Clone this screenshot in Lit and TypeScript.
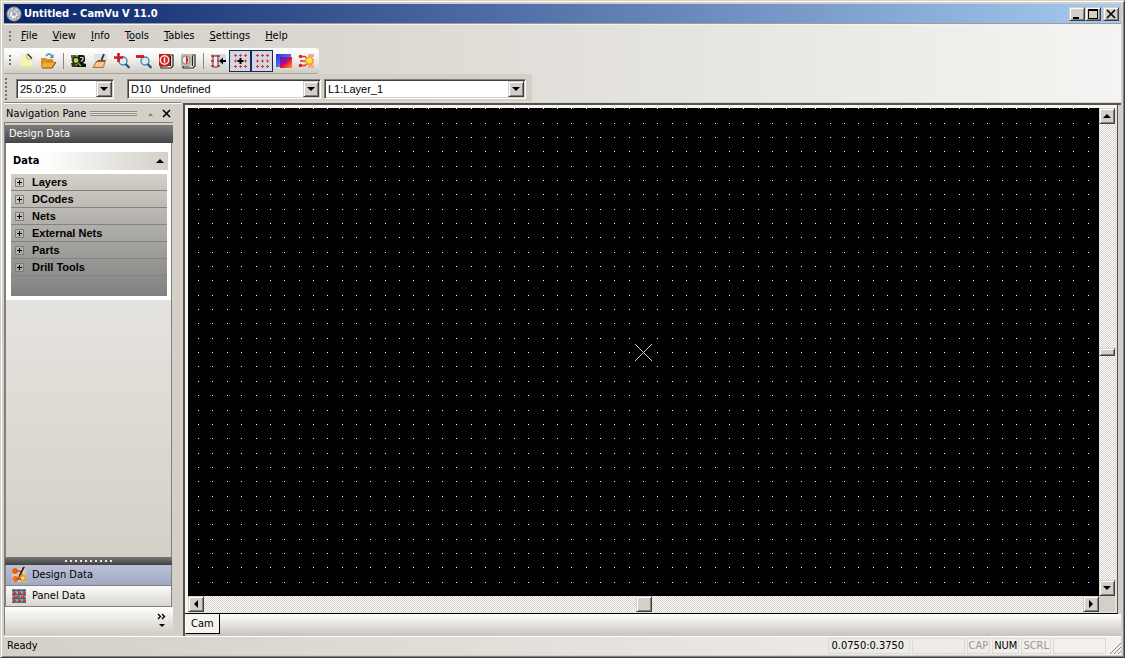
import { LitElement, html, css, svg } from "lit";
import { customElement, property } from "lit/decorators.js";
import { classMap } from "lit/directives/class-map.js";

const glyphs = {
  app: svg`<circle cx="8" cy="8" r="7" fill="#c9cdd2" stroke="#8f979f"/><path d="M4 4l3 2 1-4 2 4 3-1-2 3 3 2-4 1 1 3-3-2-2 3-1-4-4 0 3-2z" fill="#eef0f2" stroke="#7b828a" stroke-width=".7"/><circle cx="8" cy="8" r="2" fill="#9aa3ad"/>`,
  newFile: svg`<path d="M3 1h7l4 4v10H3z" fill="#f4f3b8"/><path d="M3 13h11v2H3z" fill="#e6e59a"/><path d="M9 1h1l4 4v1h-4z" fill="#fffff0"/><path d="M9.500 1l4.500 4.500" stroke="#222" stroke-width="1.300"/><path d="M9 1v5h5" fill="none" stroke="#8a8a60" stroke-width=".6"/>`,
  open: svg`<path d="M1 5h5l1 1h6v3H5l-4 6z" fill="#d98f24"/><path d="M5 9h11l-4 6H1z" fill="#f2ab35"/><path d="M2 15h10l4-6" fill="none" stroke="#8a5208" stroke-width="1.200"/><path d="M6 9h9" stroke="#a8660f" stroke-width=".7"/><path d="M6 3q3-4 6 0" fill="none" stroke="#3f8fb0" stroke-width="1.300"/><path d="M13.500 1v4H9.500z" fill="#3f8fb0"/>`,
  view: svg`<path d="M1 2h14v6H1z" fill="#a9b496"/><path d="M1 2h5v3H1z" fill="#5a7026"/><path d="M8 2h5l2 2v4l-2 2 3 1v3H6l2-4z" fill="#101408"/><path d="M10 4.500h3v2l-2 2" fill="none" stroke="#d8dccc" stroke-width="1.200"/><circle cx="6" cy="7.500" r="3.200" fill="#b4d468" stroke="#1c280a" stroke-width="1.500"/><path d="M1 10h3l4 4H2z" fill="#2d3d12"/><path d="M8 10l3 3" stroke="#86a94a" stroke-width="1.500"/>`,
  clean: svg`<path d="M2 1h13v12H2z" fill="#dfe1e8"/><path d="M12 1l-2.500 6" stroke="#26313e" stroke-width="1.800"/><path d="M6 7h8l-1 2H4z" fill="#8a4a1c"/><path d="M4.500 8.500h8.500l-1.500 6H1z" fill="#f8bd85" stroke="#9a5a26" stroke-width=".8"/><path d="M4.500 13l1.500-3M8 13l1.500-3" stroke="#ffe2bf"/>`,
  zoomIn: svg`<circle cx="9" cy="8" r="4" fill="#dcecf6" stroke="#4d84a8" stroke-width="1.400"/><path d="M11.500 11l4 4" stroke="#245a84" stroke-width="2.400"/><path d="M0 4.500h9M4.500 0v9" stroke="#cf1820" stroke-width="2.600"/>`,
  zoomOut: svg`<circle cx="9" cy="8" r="4" fill="#dcecf6" stroke="#4d84a8" stroke-width="1.400"/><path d="M11.500 11l4 4" stroke="#245a84" stroke-width="2.400"/><path d="M0 3.500h8" stroke="#cf1820" stroke-width="2.800"/>`,
  zoomAll: svg`<path d="M9 2h6v11l-2 2H3v-2h6z" fill="#f1efe2" stroke="#26241c" stroke-width="1.200"/><path d="M12.500 3v10" stroke="#26241c" stroke-width="1.200"/><rect x="1" y="1" width="11" height="12" fill="#c8181c"/><circle cx="6.500" cy="7" r="4.200" fill="#d82020" stroke="#fbe4e2" stroke-width="1.500"/><path d="M6.500 4.500v5" stroke="#fff" stroke-width="1.500"/>`,
  zoomPrev: svg`<path d="M9 2h6v11l-2 2H3v-2h6z" fill="#f1efe2" stroke="#26241c" stroke-width="1.200"/><path d="M12.500 3v10" stroke="#26241c" stroke-width="1.200"/><rect x="1" y="1" width="11" height="12" fill="#bdbbb2"/><circle cx="6" cy="7" r="4" fill="#f3f1ec" stroke="#8c8b84" stroke-width="1.200"/><path d="M6.500 3.500q3 3.500 0 7z" fill="#d62222" stroke="#d62222"/>`,
  snapPad: svg`<rect x="1" y="1" width="15" height="14" fill="#cfdae3"/><path d="M3 3h5v11H3z" fill="#e9eff4" stroke="#7d2020"/><path d="M1 3h3M1 13h3M7 3h3M7 13h3M1 8h3M7 8h2" stroke="#c02626" stroke-width="1.600"/><path d="M9 8l4-3.500V7h3v2h-3v2.500z" fill="#000"/>`,
  snapGrid: svg`<path d="M2 2.500h3M7 2.500h3M12 2.500h3M2 13.500h3M7 13.500h3M12 13.500h3M2 8h3M12 8h3M3.500 1v3M8.500 1v3M13.500 1v3M3.500 12v3M8.500 12v3M13.500 12v3M3.500 6.500v3M13.500 6.500v3" stroke="#d23a3a"/><path d="M5.500 8h6M8.500 5v6" stroke="#000" stroke-width="2"/>`,
  grid: svg`<path d="M2 2.500h3M7 2.500h3M12 2.500h3M2 13.500h3M7 13.500h3M12 13.500h3M2 8h3M7 8h3M12 8h3M3.500 1v3M8.500 1v3M13.500 1v3M3.500 12v3M8.500 12v3M13.500 12v3M3.500 6.500v3M8.500 6.500v3M13.500 6.500v3" stroke="#d23a3a"/>`,
  colors: svg`<defs><linearGradient id="cb" x1="0" y1="0" x2="1" y2="1"><stop offset="0" stop-color="#2436e8"/><stop offset="1" stop-color="#5aa4ff"/></linearGradient><linearGradient id="cr" x1="0" y1="0" x2="1" y2="1"><stop offset="0" stop-color="#5b0fb0"/><stop offset=".5" stop-color="#e01040"/><stop offset="1" stop-color="#ff9a30"/></linearGradient></defs><rect x="0" y="1" width="15" height="13" fill="url(#cb)"/><rect x="4" y="4" width="12" height="11" fill="url(#cr)"/><rect x="5" y="5" width="6" height="6" fill="#7a18c0" opacity=".7"/>`,
  nets: svg`<path d="M2 3.500h5l2 2M2 8h5M2 12.500h5l2-2" fill="none" stroke="#e0301c" stroke-width="1.500"/><circle cx="2.500" cy="3.500" r="1.800" fill="#d42a1c"/><circle cx="2.500" cy="12.500" r="1.800" fill="#d42a1c"/><path d="M10 1h6v3h-6zM10 12h6v3h-6z" fill="#f0a8a0"/><circle cx="11.500" cy="8" r="4.500" fill="#f2a81c"/><circle cx="11.500" cy="7.500" r="2.800" fill="#ffdc60"/>`,
  design: svg`<rect x="1" y="1" width="14" height="14" fill="#dcc9b4"/><circle cx="4" cy="4" r="3" fill="#e8641c"/><circle cx="4.500" cy="12" r="3" fill="#ee7420"/><circle cx="12" cy="11" r="3.600" fill="#f0a21c"/><circle cx="12" cy="11" r="1.500" fill="#d9dce4"/><path d="M5 4h4l2 4M5 12h5" fill="none" stroke="#c8541a" stroke-width="1.300"/><path d="M14 0l-5 9-2 4 1-5 4-8z" fill="#1e1e28"/>`,
  panel: svg`<rect x="1" y="1" width="14" height="14" fill="#9fb0b8"/><path d="M1 2.500h14M1 6.500h14M1 10.500h14M1 14h14" stroke="#4d606c" stroke-width="1.300"/><path d="M3 1v14M8 1v14M13 1v14" stroke="#5a4a50"/><path d="M2 4h3v2H2zM7 4h3v2H7zM12 4h3v2h-3zM4 8h3v2H4zM10 8h3v2h-3zM2 12h3v2H2zM7 12h3v2H7zM12 12h3v2h-3z" fill="#c83c44"/>`,
  min: svg`<path d="M4 11h6v2H4z" fill="#000"/>`,
  max: svg`<path d="M3 3h10v10H3zM4 5v7h8V5z" fill="#000" fill-rule="evenodd"/>`,
  close: svg`<path d="M4 4l8 8M12 4l-8 8" stroke="#000" stroke-width="1.700"/>`,
  up: svg`<path d="M4 10h8L8 6z" fill="#000"/>`,
  down: svg`<path d="M4 6h8l-4 4z" fill="#000"/>`,
  left: svg`<path d="M10 4v8L6 8z" fill="#000"/>`,
  right: svg`<path d="M6 4v8l4-4z" fill="#000"/>`,
  more: svg`<path d="M4 1l2.500 2.500L4 6M8 1l2.500 2.500L8 6" fill="none" stroke="#000" stroke-width="1.400"/><path d="M5 11h6l-3 3z" fill="#000"/>`,
};
type Glyph = keyof typeof glyphs;

const icon = (name: Glyph) =>
  html`<svg class="icon" width="16" height="16" viewBox="0 0 16 16" aria-hidden="true">${glyphs[name]}</svg>`;

const controls = css`
  * { box-sizing: border-box; }
  button, select {
    font: inherit;
    color: inherit;
    margin: 0;
    padding: 0;
    border: 0;
    background: none;
    border-radius: 0;
  }
  .icon { display: block; flex: none; }
  .raised {
    display: grid;
    place-content: center;
    background: #d4d0c8;
    border: 1px solid;
    border-color: #d4d0c8 #404040 #404040 #d4d0c8;
    box-shadow: inset 1px 1px #fff, inset -1px -1px #808080;
    overflow: hidden;
  }
`;

/** Drawing surface: black canvas with a dot grid and an origin cross. */
@customElement("cam-board")
export class CamBoard extends LitElement {
  @property({ type: Number }) pitch = 14.35;
  private observer = new ResizeObserver(() => this.draw());

  static styles = css`
    :host { display: block; min-width: 0; min-height: 0; overflow: hidden; background: #000; contain: size; }
    canvas { display: block; }
  `;

  connectedCallback() {
    super.connectedCallback();
    this.observer.observe(this);
  }
  disconnectedCallback() {
    this.observer.disconnect();
    super.disconnectedCallback();
  }
  protected firstUpdated() {
    this.draw();
  }

  private draw() {
    const canvas = this.renderRoot.querySelector("canvas");
    const g = canvas?.getContext("2d");
    if (!canvas || !g) return;
    const w = (canvas.width = this.clientWidth);
    const h = (canvas.height = this.clientHeight);
    const cx = Math.floor(w / 2);
    const cy = Math.floor(h / 2);
    const nx = Math.ceil(cx / this.pitch);
    const ny = Math.ceil(cy / this.pitch);
    g.fillStyle = "#f4f4f4";
    for (let i = -nx; i <= nx; i++) {
      for (let j = -ny; j <= ny; j++) {
        g.fillRect(Math.floor(cx + 0.47 + i * this.pitch), Math.floor(cy + 0.6 + j * this.pitch), 1, 1);
      }
    }
    g.fillStyle = "#d0d0d0";
    for (let k = -8; k <= 8; k++) {
      g.fillRect(cx + k, cy + k, 1, 1);
      g.fillRect(cx + k, cy - k, 1, 1);
    }
  }

  render() {
    return html`<canvas role="img" aria-label="Board"></canvas>`;
  }
}

/** Scroll bar with arrow buttons and a centred thumb. */
@customElement("cam-scroll")
export class CamScroll extends LitElement {
  @property({ type: Boolean, reflect: true }) vertical = false;

  static styles = [
    controls,
    css`
      :host {
        display: flex;
        background: repeating-conic-gradient(#fff 0 25%, #d4d0c8 0 50%) 0 0 / 2px 2px;
      }
      :host([vertical]) { flex-direction: column; }
      .raised { width: 16px; height: 16px; flex: none; }
      .track { flex: 1; display: flex; justify-content: center; align-items: center; }
      :host([vertical]) .track { flex-direction: column; }
      :host([vertical]) .thumb { height: 8px; }
    `,
  ];

  render() {
    const v = this.vertical;
    return html`
      <button class="raised" aria-label=${v ? "Up" : "Left"}>${icon(v ? "up" : "left")}</button>
      <div class="track"><button class="raised thumb" aria-label="Thumb"></button></div>
      <button class="raised" aria-label=${v ? "Down" : "Right"}>${icon(v ? "down" : "right")}</button>
    `;
  }
}

/** Docked pane on the left side. */
@customElement("nav-pane")
export class NavPane extends LitElement {
  private nodes = ["Layers", "DCodes", "Nets", "External Nets", "Parts", "Drill Tools"];

  static styles = [
    controls,
    css`
      :host { display: flex; flex-direction: column; border-top: 1px solid #808080; box-shadow: inset 0 1px #fff; }
      .caption { display: flex; align-items: center; gap: 4px; height: 19px; padding: 2px 9px 0 2px; }
      .grip { flex: 1; height: 5px; background: repeating-linear-gradient(#8d8a84 0 1px, #e6e3dc 1px 2px); margin: 0 1px 0 0; }
      .frame {
        flex: 1; display: flex; flex-direction: column; min-height: 0;
        margin: 0 8px 1px 0; border-top: 1px solid #808080; border-left: 1px solid #808080; padding-top: 2px;
      }
      h2 {
        margin: 0; padding: 0 4px; height: 18px; line-height: 17px; font-size: 11px; font-weight: normal;
        color: #fff; background: linear-gradient(#7d7d7d, #444);
      }
      .body {
        flex: 1; display: flex; flex-direction: column;
        border-left: 1px solid #808080; border-right: 1px solid #808080;
        margin-right: 1px; background: linear-gradient(#f0efec, #d4d0c8);
      }
      .card { background: #fff; padding: 9px 3px 4px 5px; }
      .section {
        display: flex; width: 100%; align-items: center; justify-content: space-between;
        height: 18px; padding-left: 2px; font-weight: bold;
        background: linear-gradient(90deg, #fff 20%, #d4d0c8);
      }
      .tree {
        margin: 4px 1px 0 0; padding: 0 0 20px; list-style: none;
        background: linear-gradient(#d4d0c8, #808080);
        font: bold 11px "Liberation Sans", Arial, sans-serif;
      }
      .tree li { border-bottom: 1px solid #85837f; height: 17px; }
      .node { display: flex; align-items: center; gap: 8px; height: 16px; padding-left: 4px; width: 100%; }
      .box { display: block; }
      .splitter {
        height: 8px; margin-right: 1px; background: linear-gradient(#777, #404040);
        display: grid; place-items: center;
      }
      .dots { width: 48px; height: 2px; background: repeating-linear-gradient(90deg, #e8e8e8 0 2px, transparent 2px 5px); }
      .tab {
        display: flex; align-items: center; gap: 5px; width: calc(100% - 1px); height: 21px; padding-left: 5px;
        border: 1px solid #808080; border-width: 0 1px 1px; background: linear-gradient(#fbfbfa, #d9d6cf);
      }
      .tab.on { background: linear-gradient(#b9c0d8, #a2a9c2); }
      .foot { display: flex; justify-content: flex-end; align-items: center; height: 28px; padding-right: 3px; background: linear-gradient(#fff, #d0ccc4); }
    `,
  ];

  render() {
    return html`
      <div class="caption">
        <span>Navigation Pane</span><span class="grip"></span>
        <svg width="16" height="8" viewBox="0 0 16 8" aria-hidden="true"><path d="M6 6h5L8.500 3z" fill="#85827c" /></svg>
        <button aria-label="Close pane">
          <svg class="icon" width="10" height="10" viewBox="0 0 10 10"><path d="M1 1l7 7M8 1L1 8" stroke="#000" stroke-width="1.600" /></svg>
        </button>
      </div>
      <div class="frame">
        <h2>Design Data</h2>
        <div class="body">
          <div class="card">
            <button class="section">Data ${icon("up")}</button>
            <ul class="tree">
              ${this.nodes.map(
                (n) => html`<li><button class="node">
                  <svg class="box" width="9" height="9" viewBox="0 0 9 9" aria-hidden="true"><path d="M.5 .5h8v8h-8z" fill="#d8d5ce" fill-opacity=".3" stroke="#7c7c7c" /><path d="M2 4.500h5M4.500 2v5" stroke="#000" /></svg>${n}</button></li>`
              )}
            </ul>
          </div>
        </div>
        <div class="splitter"><span class="dots"></span></div>
        <button class="tab on">${icon("design")}Design Data</button>
        <button class="tab">${icon("panel")}Panel Data</button>
        <div class="foot"><button aria-label="More">${icon("more")}</button></div>
      </div>
    `;
  }
}

type Tool = Glyph | "|";

@customElement("app-root")
export class AppRoot extends LitElement {
  private menus: [string, number][] = [
    ["File", 0], ["View", 0], ["Info", 0], ["Tools", 1], ["Tables", 0], ["Settings", 0], ["Help", 0],
  ];
  private tools: Tool[] = [
    "newFile", "open", "|", "view", "clean", "zoomIn", "zoomOut", "zoomAll", "zoomPrev", "|",
    "snapPad", "snapGrid", "grid", "colors", "nets",
  ];
  private pressed: Tool[] = ["snapGrid", "grid"];

  static styles = [
    controls,
    css`
      :host {
        display: flex;
        flex-direction: column;
        height: 100vh;
        box-sizing: border-box;
        background: #d4d0c8;
        border: 1px solid;
        border-color: #d4d0c8 #404040 #404040 #d4d0c8;
        box-shadow: inset 1px 1px #fff, inset -1px -1px #808080;
        font: 11px/14px "DejaVu Sans Condensed", Tahoma, sans-serif;
        color: #000;
        padding: 3px 3px 2px;
      }
      .title {
        display: flex; align-items: center; gap: 2px; height: 19px; padding: 0 2px;
        background: linear-gradient(90deg, #0a246a, #a6caf0);
      }
      h1 { flex: 1; margin: 0; font-size: 11px; font-weight: bold; color: #fff; }
      .caps { display: flex; }
      .caps .raised { width: 16px; height: 14px; }
      .caps .last { margin-left: 2px; }
      .bars {
        border-top: 1px solid #a09d96; padding-bottom: 1px; box-shadow: inset 0 1px #f4f3f0;
        background: linear-gradient(90deg, #d4d0c8, #dbd8d1 30%, #f5f4f2);
      }
      .grip { width: 2px; height: 11px; flex: none; background: repeating-linear-gradient(#77746e 0 2px, transparent 2px 4px); }
      .grip.tall { height: 22px; }
      nav { display: flex; align-items: center; gap: 1px; height: 24px; padding-left: 5px; }
      nav .menu { padding: 0 7px; height: 20px; }
      nav .grip { margin-right: 2px; }
      .tools {
        display: flex; align-items: center; width: fit-content; height: 26px; padding: 0 2px 0 5px;
        border-radius: 0 4px 4px 0; border-bottom: 1px solid #aaa7a0;
        background: linear-gradient(#fff, #f4f3f0 40%, #d0ccc4);
      }
      .tools .grip { margin-right: 4px; }
      .tool { width: 22px; height: 22px; display: grid; place-content: center; }
      .tool.on { background: #d4d7e2; border: 1px solid #16285c; }
      .sep { width: 1px; height: 16px; margin: 0 3px 0 4px; background: #8a8780; }
      .combos { display: flex; align-items: center; width: fit-content; height: 27px; padding: 2px 6px 0 1px; background: #d4d0c8; border-right: 1px solid #dfdcd6; }
      .combo {
        display: flex; position: relative; height: 20px; background: #fff;
        border: 1px solid; border-color: #808080 #fff #fff #808080;
        box-shadow: inset 1px 1px #404040, inset -1px -1px #d4d0c8;
        font: 11px "Liberation Sans", Arial, sans-serif;
      }
      .combo select { appearance: none; width: 100%; padding: 0 20px 0 3px; white-space: pre; outline: none; }
      .combo .arrow { position: absolute; right: 1px; top: 1px; width: 16px; height: 16px; pointer-events: none; }
      .scale { width: 98px; margin: 0 13px 0 9px; }
      .code { width: 194px; margin-right: 3px; }
      .layer { width: 202px; }
      main { flex: 1; display: grid; grid-template-columns: 177px 1fr; gap: 2px; min-height: 0; }
      .doc { display: flex; flex-direction: column; min-width: 0; border: solid #55534f; border-width: 2px 0 0 2px; margin-top: 1px; }
      .view {
        flex: 1; min-height: 0; display: grid; grid-template: 1fr 16px / 1fr 16px;
        padding: 3px 2px 1px 3px; margin-right: 3px; background: #e4e2dc;
        box-shadow: inset 3px 3px #f6f5f2;
        border-right: 1px solid #55534f; border-bottom: 1px solid #000;
      }
      .corner { background: #d4d0c8; }
      .tabs { height: 22px; padding-bottom: 1px; background: linear-gradient(#fff, #c8c4bc); }
      .tabs button { height: 20px; padding: 0 5px; border: 1px solid #000; border-width: 0 1px 1px; border-left-color: #fff; background: #f5f4f0; }
      footer {
        display: flex; align-items: center; gap: 2px; height: 19px; padding-left: 3px; border-top: 1px solid #fff;
        background: linear-gradient(90deg, #d4d0c8, #f3f2ef);
      }
      .ready { flex: 1; }
      .field { height: 16px; padding: 0 1px; border: 1px solid #dddad4; }
      .off { color: #9a9892; }
      .blank { width: 53px; }
      .coords { width: 82px; padding-left: 3px; }
    `,
  ];

  private combo(kind: string, label: string, value: string) {
    return html`<label class="combo ${kind}">
      <select aria-label=${label}><option>${value}</option></select>
      <span class="arrow raised">${icon("down")}</span>
    </label>`;
  }

  render() {
    return html`
      <header>
        <div class="title">
          ${icon("app")}
          <h1>Untitled - CamVu V 11.0</h1>
          <div class="caps">
            <button class="raised" aria-label="Minimize">${icon("min")}</button>
            <button class="raised" aria-label="Maximize">${icon("max")}</button>
            <button class="raised last" aria-label="Close">${icon("close")}</button>
          </div>
        </div>
        <div class="bars">
          <nav>
            <span class="grip"></span>
            ${this.menus.map(
              ([m, k]) => html`<button class="menu">${m.slice(0, k)}<u>${m[k]}</u>${m.slice(k + 1)}</button>`
            )}
          </nav>
          <div class="tools" role="toolbar">
            <span class="grip"></span>
            ${this.tools.map((t) =>
              t === "|"
                ? html`<span class="sep"></span>`
                : html`<button class=${classMap({ tool: true, on: this.pressed.includes(t) })} aria-label=${t}>${icon(t)}</button>`
            )}
          </div>
          <div class="combos">
            <span class="grip tall"></span>
            ${this.combo("scale", "Grid", "25.0:25.0")}
            ${this.combo("code", "D-code", "D10\u00a0\u00a0 Undefined")}
            ${this.combo("layer", "Layer", "L1:Layer_1")}
          </div>
        </div>
      </header>
      <main>
        <nav-pane></nav-pane>
        <section class="doc">
          <div class="view">
            <cam-board></cam-board>
            <cam-scroll vertical></cam-scroll>
            <cam-scroll></cam-scroll>
            <span class="corner"></span>
          </div>
          <div class="tabs"><button>Cam</button></div>
        </section>
      </main>
      <footer>
        <span class="ready">Ready</span>
        <span class="field coords">0.0750:0.3750</span>
        <span class="field blank"></span>
        <span class="field off">CAP</span>
        <span class="field">NUM</span>
        <span class="field off">SCRL</span>
        <span class="field blank"></span>
        <svg class="icon" width="13" height="16" viewBox="3 0 13 16" aria-hidden="true"><path d="M5 16L16 5M9 16l7-7M13 16l3-3" stroke="#8a8780" /></svg>
      </footer>
    `;
  }
}
